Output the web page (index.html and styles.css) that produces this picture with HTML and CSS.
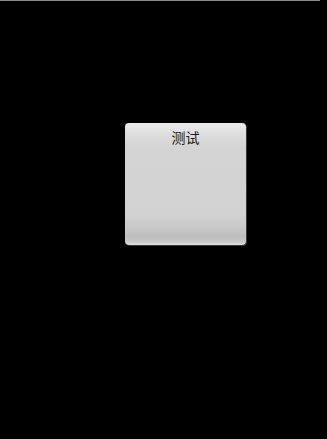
FILE: index.html
```html
<!DOCTYPE html>
<html>
<head>
<meta charset="utf-8">
<link rel="stylesheet" href="styles.css">
</head>
<body>
<div class="topline"></div>
<div class="stage">
  <div class="card">
    <div class="title">测试</div>
  </div>
</div>
</body>
</html>
```
FILE: styles.css
```css
html, body {
  margin: 0;
  padding: 0;
  background: #000;
  width: 327px;
  height: 439px;
  overflow: hidden;
}
.topline {
  width: 320px;
  height: 1px;
  background: #8a8a8a;
}
.stage {
  padding-top: 122px;
  padding-left: 125px;
}
.card {
  width: 121px;
  height: 122px;
  border-radius: 4px;
  background: linear-gradient(to bottom,
    #ececec 0%,
    #dcdcdc 10%,
    #d4d4d4 20%,
    #d2d2d2 75%,
    #cacaca 85%,
    #bdbdbd 93%,
    #c8c8c8 97%,
    #e0e0e0 100%);
  box-shadow: 1px 1px 0 #3a3a3a;
  box-sizing: border-box;
  padding-top: 4px;
}
.title {
  text-align: center;
  font-family: "Noto Sans CJK SC", sans-serif;
  font-size: 14px;
  line-height: 20px;
  color: #1a1a1a;
}
```
